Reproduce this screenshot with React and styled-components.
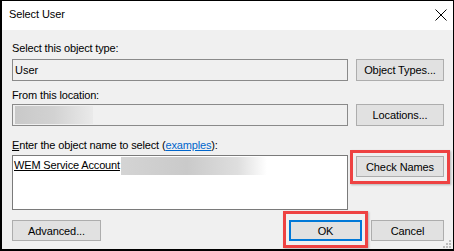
import React from "react";
import styled, { createGlobalStyle } from "styled-components";

const Global = createGlobalStyle`
  html, body { margin: 0; padding: 0; background: #fff; }
  body {
    font-family: "Liberation Sans", Arial, sans-serif;
    font-size: 11px;
    color: #000;
  }
  * { box-sizing: border-box; }
`;

const Dialog = styled.div`
  width: 454px;
  height: 251px;
  border-style: solid;
  border-color: #000;
  border-width: 1px 1px 2px 2px;
  display: flex;
  flex-direction: column;
  background: #f0f0f0;
  overflow: hidden;
  position: relative;
`;

const TitleBar = styled.div`
  height: 29px;
  background: #fff;
  display: flex;
  align-items: center;
  justify-content: space-between;
  padding: 0 6px 2px 7px;
`;

const Title = styled.span`
  line-height: 13px;
  letter-spacing: -0.1px;
`;

const Body = styled.div`
  flex: 1;
  display: flex;
  flex-direction: column;
  padding: 11px 9px 0 10px;
`;

const Label = styled.div`
  line-height: 14px;
  letter-spacing: -0.15px;
  margin-top: ${(p) => p.$mt || 0}px;
  margin-bottom: ${(p) => p.$mb || 0}px;
`;

const Row = styled.div`
  display: grid;
  grid-template-columns: 1fr 88px;
  column-gap: 8px;
  align-items: start;
`;

const Field = styled.div`
  height: 22px;
  border: 1px solid #8a8a8a;
  background: #f0f0f0;
  display: flex;
  align-items: center;
  padding: 0 2px;
  line-height: 14px;
`;

const Blur = styled.div`
  width: ${(p) => p.$w}px;
  height: 18px;
  background: ${(p) => p.$bg};
  filter: blur(0.6px);
`;

const TextArea = styled.div`
  height: 55px;
  border: 1px solid #7a7a7a;
  background: #fff;
  display: flex;
  align-items: flex-start;
  padding: 1px 1px;
  line-height: 14px;
`;

const Entry = styled.span`
  text-decoration: underline;
  text-underline-offset: 1px;
  letter-spacing: -0.15px;
  padding-top: 1px;
  padding-right: 1px;
`;

const Button = styled.button`
  font: inherit;
  color: #000;
  height: ${(p) => p.$h || 22}px;
  width: ${(p) => (p.$w ? `${p.$w}px` : "100%")};
  margin-top: ${(p) => p.$mt || 0}px;
  background: #e1e1e1;
  border: ${(p) => (p.$default ? "2px solid #0078d7" : "1px solid #adadad")};
  padding: 0;
  line-height: 14px;
  letter-spacing: -0.1px;
  position: relative;
  ${(p) =>
    p.$highlight
      ? `&::after {
    content: "";
    position: absolute;
    inset: ${p.$highlight};
    border: 3px solid #ee4242;
    box-shadow: 1px 1px 2px rgba(0,0,0,0.25);
    pointer-events: none;
  }`
      : ""}
`;

const Underline = styled.span`
  text-decoration: underline;
  text-underline-offset: 1px;
`;

const Link = styled.span`
  color: #0066cc;
  text-decoration: underline;
  text-underline-offset: 1px;
`;

const Footer = styled.div`
  margin-top: 10px;
  display: flex;
  justify-content: space-between;
  align-items: center;
`;

const ButtonGroup = styled.div`
  display: flex;
  gap: 9px;
`;

const Grip = styled.svg`
  position: absolute;
  right: 1px;
  bottom: 0px;
`;

function CloseIcon() {
  return (
    <svg width="12" height="12" viewBox="0 0 12 12">
      <path d="M0.5 0.5 L11.5 11.5 M11.5 0.5 L0.5 11.5" stroke="#000" strokeWidth="1" fill="none" />
    </svg>
  );
}

export default function App() {
  return (
    <>
      <Global />
      <Dialog>
        <TitleBar>
          <Title>Select User</Title>
          <CloseIcon />
        </TitleBar>
        <Body>
          <Label $mb={4}>Select this object type:</Label>
          <Row>
            <Field>User</Field>
            <Button>Object Types...</Button>
          </Row>
          <Label $mt={7} $mb={2}>From this location:</Label>
          <Row>
            <Field>
              <Blur $w={78} $bg="linear-gradient(to right, #c9c9c9, #d2d2d2 50%, #eaeaea)" />
            </Field>
            <Button>Locations...</Button>
          </Row>
          <Label $mt={12} $mb={3}>
            <Underline>E</Underline>nter the object name to select (<Link>examples</Link>):
          </Label>
          <Row>
            <TextArea>
              <Entry>WEM Service Account</Entry>
              <Blur $w={146} $bg="linear-gradient(to right, #d4d4d4, #cacaca 45%, #dedede 80%, #ffffff)" />
            </TextArea>
            <Button $h={21} $mt={1} $highlight="-7px -7px -8px -7px">
              Check Names
            </Button>
          </Row>
          <Footer>
            <Button $w={89} $h={21}>Advanced...</Button>
            <ButtonGroup>
              <Button $w={73} $h={21} $default $highlight="-11px -8px -9px -8px">
                OK
              </Button>
              <Button $w={73} $h={21}>Cancel</Button>
            </ButtonGroup>
          </Footer>
        </Body>
        <Grip width="9" height="9" viewBox="0 0 9 9">
          {[
            [6, 0],
            [6, 3],
            [3, 3],
            [6, 6],
            [3, 6],
            [0, 6],
          ].map(([x, y], i) => (
            <rect key={i} x={x} y={y} width="2" height="2" fill="#bcbcbc" />
          ))}
        </Grip>
      </Dialog>
    </>
  );
}
